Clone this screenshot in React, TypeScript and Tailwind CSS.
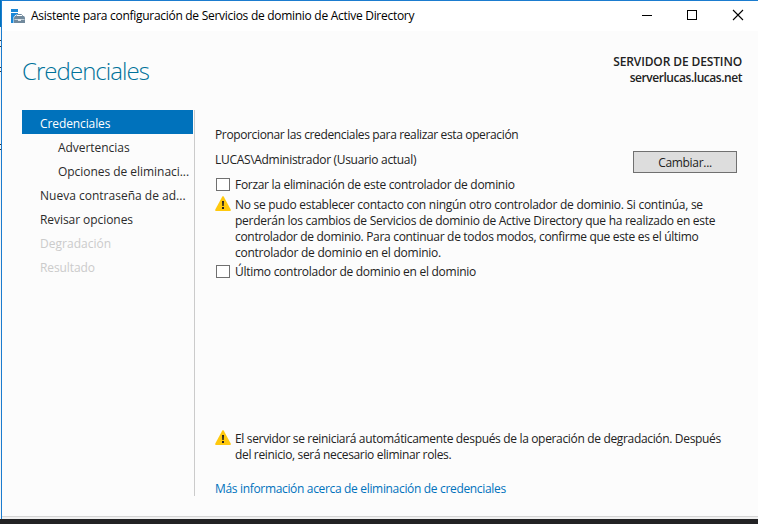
import type { ReactNode } from "react";

const steps = [
  { label: "Credenciales", className: "bg-[#0072bc] pl-[18px] text-white tracking-[-0.1px]" },
  { label: "Advertencias", className: "pl-9 text-[#2b2b2b] tracking-[-0.04px]" },
  { label: "Opciones de eliminaci...", className: "pl-9 text-[#2b2b2b] tracking-[-0.04px]" },
  { label: "Nueva contraseña de ad...", className: "pl-[18px] text-[#2b2b2b] tracking-[0.01px]" },
  { label: "Revisar opciones", className: "pl-[18px] text-[#2b2b2b] tracking-[-0.06px]" },
  { label: "Degradación", className: "pl-[18px] text-[#cbcbcb] tracking-[0.02px]" },
  { label: "Resultado", className: "pl-[18px] text-[#cbcbcb] tracking-[-0.1px]" },
];

function Line({ children, className }: { children: ReactNode; className: string }) {
  return (
    <div className="h-4 pt-px">
      <span className={`whitespace-nowrap ${className}`}>{children}</span>
    </div>
  );
}

function Warning() {
  return (
    <svg className="h-[15px] w-4 shrink-0" viewBox="0 0 16 15">
      <path d="M7.2.7Q8-.5 8.8.7L15.7 13.5Q16.2 15 15 15H1Q-.2 15 .3 13.5Z" fill="#ffc90e" />
      <path d="M7 5h2l-.3 5H7.3zM7 11h2v2H7z" fill="#222" />
    </svg>
  );
}

function Checkbox({ label, className }: { label: string; className: string }) {
  return (
    <label className="flex h-4 items-center">
      <span className="ml-px h-[13px] w-[14px] shrink-0 border border-[#707070] bg-white" />
      <span className={`ml-[5px] pt-[2px] whitespace-nowrap ${className}`}>{label}</span>
    </label>
  );
}

function ServerIcon() {
  return (
    <svg className="h-4 w-[15px]" viewBox="0 0 15 16">
      <path d="M0 1h7v3H0zM0 5h7v1L4.500 7 2.500 9v6H0z" fill="#1b87d6" />
      <path d="M5.500 8.500V7.500L6.500 6.500h4l1 1v1" fill="none" stroke="#71899c" />
      <path d="M4 8h9l1 1.500V15H3V9.500z" fill="#71899c" />
      <path d="M3.500 11.500H7m3 0h3.500" stroke="#c7d3dc" fill="none" />
      <path d="M7 11h3v2H7z" fill="#e0e7ec" />
    </svg>
  );
}

export default function App() {
  return (
    <div className="flex h-[524px] w-[758px] flex-col overflow-hidden bg-[#222224] font-['Open_Sans','Noto_Sans',sans-serif] text-[12px] leading-4 text-[#222]">
      <div className="flex h-[519px]">
        <div className="flex w-px flex-col bg-[#f5f5f5]">
          <span className="h-[27px] bg-[#0072bc]" />
          <span className="mt-[13px] h-px bg-[#333]" />
          <span className="mt-[5px] h-px bg-[#333]" />
          <span className="mt-5 h-px bg-[#333]" />
          <span className="mt-[3px] h-px bg-[#333]" />
          <span className="mt-[72px] h-px bg-[#333]" />
          <span className="mt-[4px] h-px bg-[#333]" />
        </div>
        <div className="flex w-[757px] flex-col border-t border-l border-[#1b7ccf] bg-[#fcfcfc]">
          <header className="flex h-[30px] shrink-0 items-center bg-white pl-[9px] text-black">
            <ServerIcon />
            <span className="ml-[5px] whitespace-nowrap tracking-[-0.285px]">
              Asistente para configuración de Servicios de dominio de Active Directory
            </span>
            <svg className="mr-[13px] mb-[2px] ml-auto h-3 w-[104px]" viewBox="0 0 104 12" fill="none" stroke="#000">
              <path d="M1 6.5h10M46.500 1.500h9v9h-9z" shapeRendering="crispEdges" />
              <path d="m92 1 10 10m0-10L92 11" strokeWidth="1.1" />
            </svg>
          </header>

          <div className="flex h-[79px] shrink-0 justify-between pr-[16px] pl-5">
            <h1 className="mt-6 text-[24px] leading-8 font-light tracking-[-0.95px] text-[#00729a]">Credenciales</h1>
            <div className="mt-[23px] text-right font-semibold">
              <div className="tracking-[-0.12px]">SERVIDOR DE DESTINO</div>
              <div className="tracking-[-0.45px]">serverlucas.lucas.net</div>
            </div>
          </div>

          <div className="flex h-[386px] shrink-0 pl-5">
            <nav className="flex w-[173px] flex-col border-r border-[#cbcbcb]">
              {steps.map((step) => (
                <div key={step.label} className={`mr-px h-6 pt-[6px] whitespace-nowrap ${step.className}`}>
                  {step.label}
                </div>
              ))}
            </nav>

            <main className="flex w-[544px] flex-col pl-5">
              <div className="mt-4">
                <Line className="tracking-[-0.365px]">Proporcionar las credenciales para realizar esta operación</Line>
              </div>
              <div className="mt-[9px] flex h-[24px] w-[522px] justify-between">
                <Line className="tracking-[-0.31px]">LUCAS\Administrador (Usuario actual)</Line>
                <button className="h-[22px] w-[104px] shrink-0 border border-[#707070] bg-[#ddd] pt-[2px] tracking-[-0.3px]">
                  Cambiar...
                </button>
              </div>
              <div className="mt-[2px]">
                <Checkbox label="Forzar la eliminación de este controlador de dominio" className="tracking-[-0.3px]" />
              </div>
              <div className="mt-[4px] flex gap-1">
                <Warning />
                <div>
                  <Line className="tracking-[-0.275px]">
                    No se pudo establecer contacto con ningún otro controlador de dominio. Si continúa, se
                  </Line>
                  <Line className="tracking-[-0.28px]">
                    perderán los cambios de Servicios de dominio de Active Directory que ha realizado en este
                  </Line>
                  <Line className="tracking-[-0.315px]">
                    controlador de dominio. Para continuar de todos modos, confirme que este es el último
                  </Line>
                  <Line className="tracking-[-0.25px]">controlador de dominio en el dominio.</Line>
                </div>
              </div>
              <div className="mt-[3px]">
                <Checkbox label="Último controlador de dominio en el dominio" className="tracking-[-0.27px]" />
              </div>
              <div className="mt-[151px] flex gap-1">
                <Warning />
                <div>
                  <Line className="tracking-[-0.335px]">
                    El servidor se reiniciará automáticamente después de la operación de degradación. Después
                  </Line>
                  <Line className="tracking-[-0.35px]">del reinicio, será necesario eliminar roles.</Line>
                </div>
              </div>
              <a className="mt-[18px] whitespace-nowrap text-[#0072bc]">
                <Line className="tracking-[-0.33px]">Más información acerca de eliminación de credenciales</Line>
              </a>
            </main>
          </div>
          <div className="mt-auto h-[3px] shrink-0 border-t border-[#d5d5d5] bg-[#f0f0f0]" />
        </div>
      </div>
    </div>
  );
}
